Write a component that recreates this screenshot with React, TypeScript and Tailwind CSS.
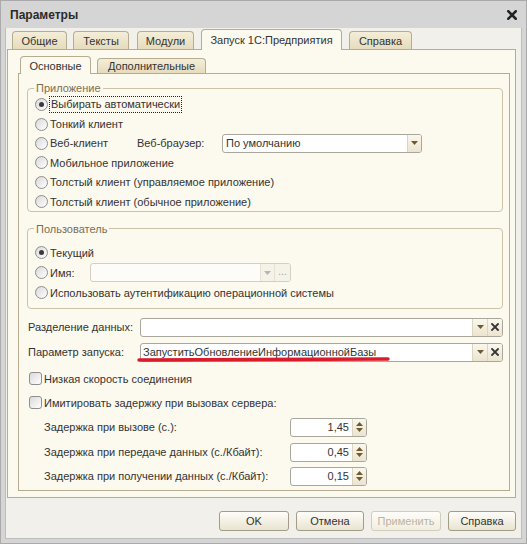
import React from "react";

const Arrow = ({ color = "#6e5b2b" }: { color?: string }) => (
  <svg width="7" height="4" viewBox="0 0 7 4">
    <path d="M0 0H7L3.5 4Z" fill={color} />
  </svg>
);

const UpArrow = ({ color = "#6e5b2b" }: { color?: string }) => (
  <svg width="7" height="4" viewBox="0 0 7 4">
    <path d="M0 4H7L3.5 0Z" fill={color} />
  </svg>
);

const Cross = ({ size = 8, stroke = 1.8, color = "#333" }: { size?: number; stroke?: number; color?: string }) => (
  <svg width={size} height={size} viewBox="0 0 8 8">
    <path d="M1 1L7 7M7 1L1 7" stroke={color} strokeWidth={stroke} strokeLinecap="square" />
  </svg>
);

const Radio = ({ checked }: { checked?: boolean }) => (
  <span className="w-[13px] h-[13px] rounded-full border border-[#8e8e8e] bg-linear-to-br from-[#d9d9d9] to-white flex items-center justify-center shrink-0">
    {checked ? <span className="w-[5px] h-[5px] rounded-full bg-[#3a3a3a]" /> : null}
  </span>
);

const Check = () => (
  <span className="w-[13px] h-[13px] rounded-[3px] border border-[#8e8e8e] bg-linear-to-br from-[#dadada] to-white shrink-0" />
);

const RadioRow = ({ label, checked, focus, h = "h-[19.4px]" }: { label: string; checked?: boolean; focus?: boolean; h?: string }) => (
  <div className={h + " flex items-center"}>
    <Radio checked={checked} />
    <span
      className={
        focus
          ? "ml-[1px] pl-[1px] pr-[1px] border border-dotted border-[#222] leading-[15px]"
          : "ml-[2px]"
      }
    >
      {label}
    </span>
  </div>
);

const BtnPart = ({ children, w = "w-[15px]" }: { children: React.ReactNode; w?: string }) => (
  <div className={w + " border-l border-[#dcd5bf] bg-linear-to-b from-[#faf7ee] to-[#ebe4cf] flex items-center justify-center"}>
    {children}
  </div>
);

const Spin = ({ value }: { value: string }) => (
  <div className="w-[77px] h-[19px] flex rounded-[3px] border border-[#a9a69c] bg-white overflow-hidden">
    <div className="flex-1 flex items-center justify-end pr-[3px]">{value}</div>
    <div className="w-[14px] border-l border-[#dcd5bf] bg-linear-to-b from-[#faf7ee] to-[#ebe4cf] flex flex-col items-center justify-center gap-[2px]">
      <UpArrow />
      <Arrow />
    </div>
  </div>
);

const Button = ({ label, w, disabled }: { label: string; w: string; disabled?: boolean }) => (
  <div
    className={
      w +
      (disabled
        ? " h-[20px] rounded-[3px] border border-[#d2ccba] text-[#bcb4a2] bg-linear-to-b from-[#fefdf9] to-[#f1ede0] flex items-center justify-center"
        : " h-[20px] rounded-[3px] border border-[#a39c88] bg-linear-to-b from-[#fefdf9] to-[#e9e4d1] flex items-center justify-center")
    }
  >
    {label}
  </div>
);

export default function App() {
  return (
    <div className="w-[527px] h-[544px] bg-[#d5d5d5] border border-[#aaaaaa] flex flex-col font-['Liberation_Sans',Arial,sans-serif] text-[11px] leading-[14px] text-[#333333] select-none">
      {/* Title bar */}
      <div className="h-[27px] shrink-0 flex items-center justify-between pl-[9px] pr-[9px]">
        <span className="font-bold text-[12px] text-[#2a2a2a]">Параметры</span>
        <Cross size={10} stroke={2} color="#222" />
      </div>

      {/* Body */}
      <div className="flex-1 mx-[4px] mb-[4px] bg-[#f2f0ea] border-x border-b border-[#bdbdbd] flex flex-col">
        {/* Outer tabs */}
        <div className="h-[21px] shrink-0 flex items-end pl-[6px]">
          <div className="w-[55px] h-[18px] rounded-t-[4px] border border-b-0 border-[#b6ad90] bg-linear-to-b from-[#f4eed9] to-[#e6dcbc] flex items-center justify-center">
            Общие
          </div>
          <div className="ml-[6px] w-[56px] h-[18px] rounded-t-[4px] border border-b-0 border-[#b6ad90] bg-linear-to-b from-[#f4eed9] to-[#e6dcbc] flex items-center justify-center">
            Тексты
          </div>
          <div className="ml-[8px] w-[57px] h-[18px] rounded-t-[4px] border border-b-0 border-[#b6ad90] bg-linear-to-b from-[#f4eed9] to-[#e6dcbc] flex items-center justify-center">
            Модули
          </div>
          <div className="ml-[7px] w-[141px] h-[21px] -mb-[1px] relative z-10 rounded-t-[4px] border border-b-0 border-[#b6ad90] bg-[#fcf9ee] flex items-center justify-center">
            Запуск 1С:Предприятия
          </div>
          <div className="ml-[7px] w-[63px] h-[18px] rounded-t-[4px] border border-b-0 border-[#b6ad90] bg-linear-to-b from-[#f4eed9] to-[#e6dcbc] flex items-center justify-center">
            Справка
          </div>
        </div>

        {/* Outer panel */}
        <div className="ml-[1px] w-[509px] h-[449px] shrink-0 border border-[#b6ad90] bg-[#fcf9ee] pt-[6px]">
          <div className="ml-[10px] w-[492px]">
            {/* Inner tabs */}
            <div className="h-[17px] flex items-end pl-[2px]">
              <div className="w-[71px] h-[18px] -mb-[1px] relative z-10 rounded-t-[4px] border border-b-0 border-[#b6ad90] bg-[#fcf9ee] flex items-center justify-center">
                Основные
              </div>
              <div className="ml-[6px] w-[109px] h-[15px] rounded-t-[4px] border border-b-0 border-[#b6ad90] bg-linear-to-b from-[#f4eed9] to-[#e6dcbc] flex items-center justify-center">
                Дополнительные
              </div>
            </div>

            {/* Inner panel */}
            <div className="w-[492px] h-[418px] border border-[#b6ad90] bg-[#fcf9ee] pt-[7px]">
              {/* Group: Приложение */}
              <fieldset className="ml-[8px] w-[476px] border border-[#cbc3a8] rounded-[4px]">
                <legend className="ml-[6px] px-[2px] leading-[14px] text-[#7d6e4f]">Приложение</legend>
                <div className="pl-[7px]">
                  <RadioRow label="Выбирать автоматически" checked focus />
                  <RadioRow label="Тонкий клиент" />
                  <div className="h-[19.4px] flex items-center">
                    <div className="w-[102px] flex items-center">
                      <Radio />
                      <span className="ml-[2px]">Веб-клиент</span>
                    </div>
                    <span className="w-[85px]">Веб-браузер:</span>
                    <div className="w-[200px] h-[19px] flex rounded-[3px] border border-[#a9a69c] bg-white overflow-hidden">
                      <div className="flex-1 flex items-center pl-[3px]">По умолчанию</div>
                      <BtnPart w="w-[14px]">
                        <Arrow />
                      </BtnPart>
                    </div>
                  </div>
                  <RadioRow label="Мобильное приложение" />
                  <RadioRow label="Толстый клиент (управляемое приложение)" />
                  <RadioRow label="Толстый клиент (обычное приложение)" />
                </div>
              </fieldset>

              {/* Group: Пользователь */}
              <fieldset className="mt-[9.6px] ml-[8px] w-[476px] border border-[#cbc3a8] rounded-[4px]">
                <legend className="ml-[6px] px-[2px] leading-[14px] text-[#7d6e4f]">Пользователь</legend>
                <div className="pl-[7px] pt-[7px] pb-[5px]">
                  <RadioRow label="Текущий" checked h="h-[20px]" />
                  <div className="h-[20px] flex items-center">
                    <div className="w-[55px] flex items-center">
                      <Radio />
                      <span className="ml-[2px]">Имя:</span>
                    </div>
                    <div className="w-[201px] h-[19px] flex rounded-[3px] border border-[#d3cfc3] bg-[#fdfcf8] overflow-hidden">
                      <div className="flex-1" />
                      <div className="w-[14px] border-l border-[#e6e1d2] bg-[#f5f2ea] flex items-center justify-center">
                        <Arrow color="#b9b5ac" />
                      </div>
                      <div className="w-[16px] border-l border-[#e6e1d2] bg-[#f5f2ea] flex items-center justify-center text-[#a8a49a] text-[11px] leading-[11px] pb-[2px]">
                        ...
                      </div>
                    </div>
                  </div>
                  <RadioRow label="Использовать аутентификацию операционной системы" h="h-[20px]" />
                </div>
              </fieldset>

              {/* Разделение данных */}
              <div className="mt-[9px] h-[19px] flex items-center pl-[9px]">
                <span className="w-[112px]">Разделение данных:</span>
                <div className="w-[363px] h-[19px] flex rounded-[3px] border border-[#a9a69c] bg-white overflow-hidden">
                  <div className="flex-1" />
                  <BtnPart>
                    <Arrow />
                  </BtnPart>
                  <BtnPart>
                    <Cross />
                  </BtnPart>
                </div>
              </div>

              {/* Параметр запуска */}
              <div className="relative mt-[6px] h-[19px] flex items-center pl-[9px]">
                <span className="w-[112px]">Параметр запуска:</span>
                <div className="w-[363px] h-[19px] flex rounded-[3px] border border-[#a9a69c] bg-white overflow-hidden">
                  <div className="flex-1 flex items-center pl-[2px]">ЗапуститьОбновлениеИнформационнойБазы</div>
                  <BtnPart>
                    <Arrow />
                  </BtnPart>
                  <BtnPart>
                    <Cross />
                  </BtnPart>
                </div>
                <svg className="absolute left-[118px] top-[13px]" width="254" height="7" viewBox="0 0 254 7">
                  <path d="M2 4 C 70 3.2, 150 3, 251 3" stroke="#d91c2b" strokeWidth="3.4" strokeLinecap="round" fill="none" />
                </svg>
              </div>

              {/* Checkboxes */}
              <div className="mt-[7px] h-[20px] flex items-center pl-[10px]">
                <Check />
                <span className="ml-[2px]">Низкая скорость соединения</span>
              </div>
              <div className="mt-[4px] h-[20px] flex items-center pl-[10px]">
                <Check />
                <span className="ml-[2px]">Имитировать задержку при вызовах сервера:</span>
              </div>

              {/* Delays */}
              <div className="mt-[5px] h-[19px] flex items-center pl-[25px]">
                <span className="w-[246px]">Задержка при вызове (с.):</span>
                <Spin value="1,45" />
              </div>
              <div className="mt-[6px] h-[19px] flex items-center pl-[25px]">
                <span className="w-[246px]">Задержка при передаче данных (с./Кбайт):</span>
                <Spin value="0,45" />
              </div>
              <div className="mt-[5px] h-[19px] flex items-center pl-[25px]">
                <span className="w-[246px]">Задержка при получении данных (с./Кбайт):</span>
                <Spin value="0,15" />
              </div>
            </div>
          </div>
        </div>

        {/* Buttons */}
        <div className="mt-[13px] flex justify-end gap-[7px] pr-[5px]">
          <Button label="OK" w="w-[70px]" />
          <Button label="Отмена" w="w-[68px]" />
          <Button label="Применить" w="w-[70px]" disabled />
          <Button label="Справка" w="w-[68px]" />
        </div>
      </div>
    </div>
  );
}
